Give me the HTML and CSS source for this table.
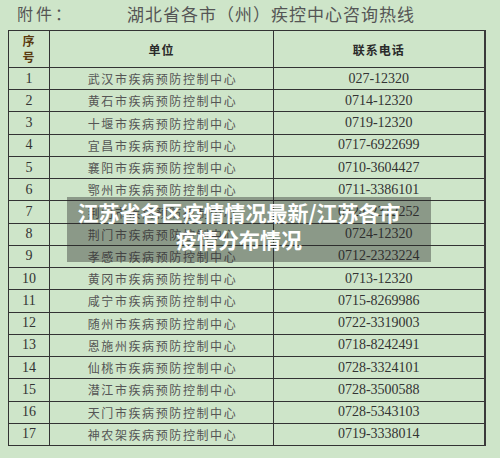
FILE: index.html
```html
<!DOCTYPE html>
<html lang="zh">
<head>
<meta charset="utf-8">
<link rel="stylesheet" href="styles.css">
</head>
<body>
<div class="page">
  <div class="title">
    <span class="attach">附件：</span>
    <span class="heading">湖北省各市（州）疾控中心咨询热线</span>
  </div>
  <table class="tbl">
    <colgroup><col class="c1"><col class="c2"><col class="c3"></colgroup>
    <thead>
      <tr><th class="seq">序<br>号</th><th>单位</th><th>联系电话</th></tr>
    </thead>
    <tbody>
      <tr><td class="n">1</td><td class="u">武汉市疾病预防控制中心</td><td class="p">027-12320</td></tr>
      <tr><td class="n">2</td><td class="u">黄石市疾病预防控制中心</td><td class="p">0714-12320</td></tr>
      <tr><td class="n">3</td><td class="u">十堰市疾病预防控制中心</td><td class="p">0719-12320</td></tr>
      <tr><td class="n">4</td><td class="u">宜昌市疾病预防控制中心</td><td class="p">0717-6922699</td></tr>
      <tr><td class="n">5</td><td class="u">襄阳市疾病预防控制中心</td><td class="p">0710-3604427</td></tr>
      <tr><td class="n">6</td><td class="u">鄂州市疾病预防控制中心</td><td class="p">0711-3386101</td></tr>
      <tr><td class="n">7</td><td class="u">荆门市疾病预防控制中心</td><td class="p">0724-2312252</td></tr>
      <tr><td class="n">8</td><td class="u">荆门市疾病预防控制中心</td><td class="p">0724-12320</td></tr>
      <tr><td class="n">9</td><td class="u">孝感市疾病预防控制中心</td><td class="p">0712-2323224</td></tr>
      <tr><td class="n">10</td><td class="u">黄冈市疾病预防控制中心</td><td class="p">0713-12320</td></tr>
      <tr><td class="n">11</td><td class="u">咸宁市疾病预防控制中心</td><td class="p">0715-8269986</td></tr>
      <tr><td class="n">12</td><td class="u">随州市疾病预防控制中心</td><td class="p">0722-3319003</td></tr>
      <tr><td class="n">13</td><td class="u">恩施州疾病预防控制中心</td><td class="p">0718-8242491</td></tr>
      <tr><td class="n">14</td><td class="u">仙桃市疾病预防控制中心</td><td class="p">0728-3324101</td></tr>
      <tr><td class="n">15</td><td class="u">潜江市疾病预防控制中心</td><td class="p">0728-3500588</td></tr>
      <tr><td class="n">16</td><td class="u">天门市疾病预防控制中心</td><td class="p">0728-5343103</td></tr>
      <tr><td class="n">17</td><td class="u">神农架疾病预防控制中心</td><td class="p">0719-3338014</td></tr>
    </tbody>
  </table>
  <div class="overlay">
    <div class="overlay-text">江苏省各区疫情情况最新/江苏各市<br>疫情分布情况</div>
  </div>
</div>
</body>
</html>
```

FILE: styles.css
```css
html, body {
  margin: 0;
  padding: 0;
  background: #cee5c9;
}
.page {
  position: relative;
  width: 500px;
  height: 458px;
  overflow: hidden;
  background: #cee5c9;
}
.title {
  height: 30px;
  display: flex;
  align-items: center;
  font-family: "Noto Sans CJK SC", sans-serif;
  color: #555;
  line-height: 1;
}
.attach {
  margin-left: 17px;
  font-size: 16px;
  letter-spacing: 3px;
  margin-top: -4px;
}
.heading {
  margin-left: 53px;
  font-size: 17px;
  letter-spacing: 1px;
  margin-top: -4px;
}
.tbl {
  margin-left: 8px;
  width: 476px;
  border-collapse: collapse;
  table-layout: fixed;
}
.c1 { width: 41px; }
.c2 { width: 224px; }
.c3 { width: 211px; }
.tbl th, .tbl td {
  border: 1px solid #333;
  padding: 0;
  text-align: center;
  vertical-align: middle;
}
.tbl th {
  height: 36px;
  font-family: "Noto Sans CJK SC", sans-serif;
  font-weight: bold;
  font-size: 12px;
  color: #2a2a2a;
  letter-spacing: 1px;
}
.tbl th.seq {
  line-height: 16px;
  font-size: 12px;
  color: #5a3a10;
}
.tbl td {
  height: 21.24px;
}
.tbl tr:last-child td { border-bottom: 1.5px solid #333; }
.tbl td:last-child, .tbl th:last-child { border-right: 2px solid #3a3a3a; }
.n, .p {
  font-family: "Liberation Serif", serif;
  font-size: 14px;
  color: #333;
}
.u {
  font-family: "Noto Sans CJK SC", sans-serif;
  font-size: 12px;
  color: #555;
  letter-spacing: 1.6px;
  padding-left: 2px !important;
}
.overlay {
  position: absolute;
  left: 67px;
  top: 197px;
  width: 364px;
  height: 65px;
  background: rgba(40, 40, 40, 0.4);
  display: flex;
  justify-content: flex-start;
}
.overlay-text {
  width: 344px;
  padding-top: 2px;
  text-align: center;
  font-family: "Noto Sans CJK SC", sans-serif;
  font-weight: bold;
  font-size: 21px;
  line-height: 27px;
  color: #fff;
}
```
